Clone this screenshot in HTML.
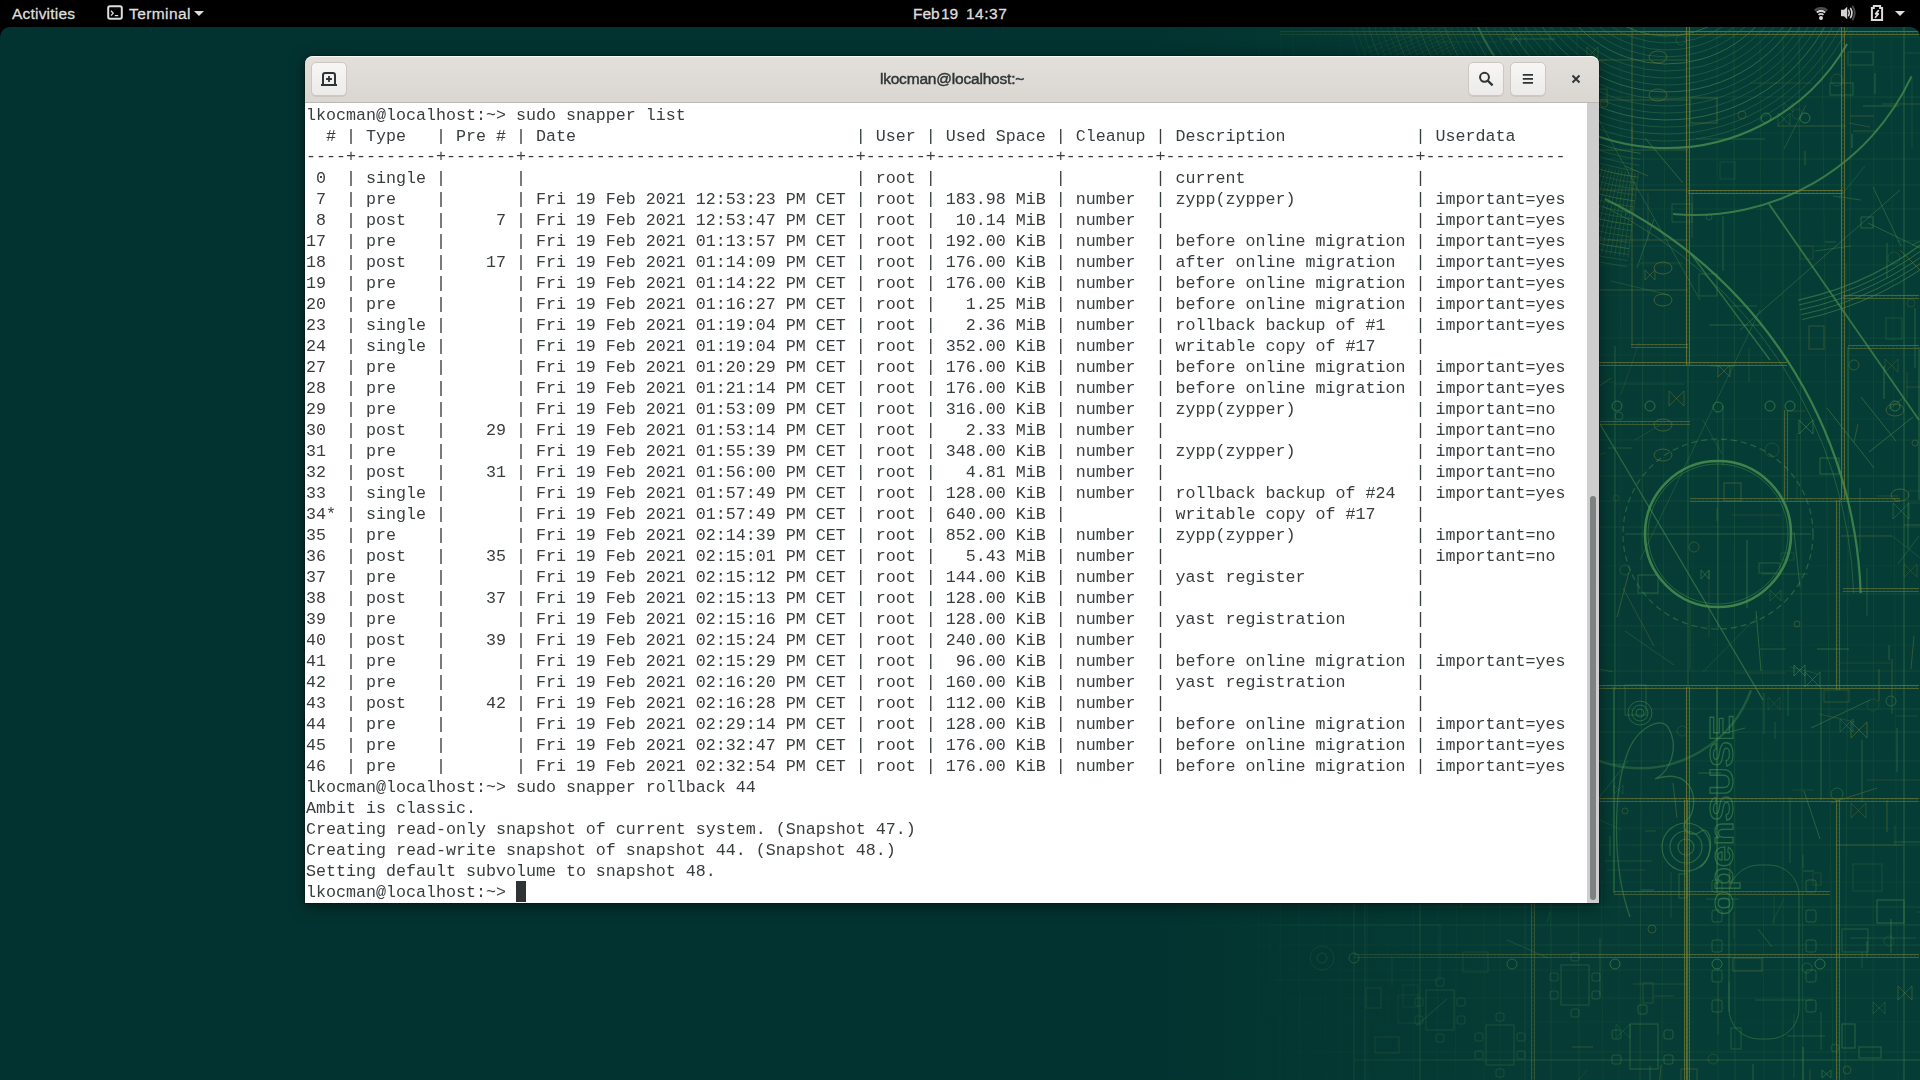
<!DOCTYPE html>
<html><head><meta charset="utf-8">
<style>
*{margin:0;padding:0;box-sizing:border-box}
html,body{width:1920px;height:1080px;overflow:hidden;background:#000}
body{position:relative;font-family:"Liberation Sans",sans-serif}
#desk{position:absolute;left:0;top:27px;width:1920px;height:1053px;background:linear-gradient(90deg,#033330 0,#033330 1150px,#053b34 1500px,#053d36 1920px);border-radius:10px 10px 0 0;overflow:hidden}
#bp{position:absolute;left:0;top:0}
#panel{position:absolute;left:0;top:0;width:1920px;height:27px;background:#000;color:#dedede;font-weight:normal;font-size:15.5px;-webkit-text-stroke:0.3px #dedede}
#panel .t{position:absolute;top:5px;line-height:18px;white-space:nowrap}
#panel svg{position:absolute;top:0;left:0}
#win{position:absolute;left:305px;top:56px;width:1294px;height:847px;border-radius:8px 8px 0 0;box-shadow:0 3px 15px rgba(0,0,0,0.5),0 0 0 1px rgba(0,0,0,0.2)}
#hb{position:absolute;left:0;top:0;width:1294px;height:47px;border-radius:8px 8px 0 0;background:linear-gradient(#e3e0dc,#dad6d2);border-bottom:1px solid #bfb8b1;box-shadow:inset 0 1px 0 rgba(255,255,255,0.8)}
#title{position:absolute;left:0;width:1294px;top:14px;line-height:18px;text-align:center;font-weight:normal;font-size:15.5px;letter-spacing:-0.2px;color:#2e3436;-webkit-text-stroke:0.45px #2e3436}
.btn{position:absolute;top:6px;width:36px;height:34px;border-radius:5px;border:1px solid #cdc7c2;background:linear-gradient(#f7f6f5,#edebe9);box-shadow:0 1px rgba(0,0,0,0.07)}
#hbsvg{position:absolute;left:0;top:0}
#term{position:absolute;left:0;top:47px;width:1282px;height:800px;background:#fff}
#sb{position:absolute;left:1282px;top:47px;width:12px;height:800px;background:#cecece}
#thumb{position:absolute;left:3px;top:393px;width:6px;height:404px;border-radius:3px;background:#7e8182}
pre{position:absolute;left:1px;top:2px;font-family:"Liberation Mono",monospace;font-size:16.6667px;line-height:21px;color:#383d3f;white-space:pre}
#cur{position:absolute;left:211px;top:778px;width:10px;height:21px;background:#2e3436}
</style></head><body>
<div id="desk">
<svg id="bp" width="1920" height="1053">
<defs>
<linearGradient id="fg" x1="0" y1="0" x2="1920" y2="0" gradientUnits="userSpaceOnUse">
<stop offset="0.60" stop-color="#fff" stop-opacity="0"/>
<stop offset="0.78" stop-color="#fff" stop-opacity="0.7"/>
<stop offset="0.86" stop-color="#fff" stop-opacity="1"/>
</linearGradient>
<mask id="fm" maskUnits="userSpaceOnUse" x="0" y="0" width="1920" height="1053"><rect width="1920" height="1053" fill="url(#fg)"/></mask>
<style>.g{stroke:#4c9450;fill:none}.o{stroke:#6f7a36;fill:none}</style>
</defs>
<g mask="url(#fm)">
<line x1="1233" y1="0" x2="1228" y2="1053" class="g" stroke-width="1" opacity="0.18"/>
<line x1="1259" y1="0" x2="1258" y2="1053" class="g" stroke-width="1" opacity="0.21"/>
<line x1="1281" y1="0" x2="1280" y2="1053" class="g" stroke-width="1" opacity="0.21"/>
<line x1="1293" y1="0" x2="1300" y2="1053" class="g" stroke-width="1" opacity="0.19"/>
<line x1="1319" y1="0" x2="1326" y2="1053" class="g" stroke-width="1" opacity="0.09"/>
<line x1="1341" y1="0" x2="1340" y2="1053" class="g" stroke-width="1" opacity="0.13"/>
<line x1="1365" y1="0" x2="1368" y2="1053" class="g" stroke-width="1" opacity="0.16"/>
<line x1="1394" y1="0" x2="1388" y2="1053" class="g" stroke-width="1" opacity="0.08"/>
<line x1="1411" y1="0" x2="1414" y2="1053" class="g" stroke-width="1" opacity="0.12"/>
<line x1="1443" y1="0" x2="1437" y2="1053" class="g" stroke-width="1" opacity="0.1"/>
<line x1="1466" y1="0" x2="1455" y2="1053" class="g" stroke-width="1" opacity="0.1"/>
<line x1="1486" y1="0" x2="1484" y2="1053" class="g" stroke-width="1" opacity="0.1"/>
<line x1="1500" y1="0" x2="1500" y2="1053" class="g" stroke-width="1" opacity="0.11"/>
<line x1="1526" y1="0" x2="1525" y2="1053" class="g" stroke-width="1" opacity="0.2"/>
<line x1="1550" y1="0" x2="1551" y2="1053" class="g" stroke-width="1" opacity="0.21"/>
<line x1="1577" y1="0" x2="1579" y2="1053" class="g" stroke-width="1" opacity="0.17"/>
<line x1="1594" y1="0" x2="1603" y2="1053" class="g" stroke-width="1" opacity="0.11"/>
<line x1="1621" y1="0" x2="1619" y2="1053" class="g" stroke-width="1" opacity="0.08"/>
<line x1="1644" y1="0" x2="1640" y2="1053" class="g" stroke-width="1" opacity="0.21"/>
<line x1="1665" y1="0" x2="1662" y2="1053" class="g" stroke-width="1" opacity="0.13"/>
<line x1="1693" y1="0" x2="1693" y2="1053" class="g" stroke-width="1" opacity="0.08"/>
<line x1="1717" y1="0" x2="1718" y2="1053" class="g" stroke-width="1" opacity="0.13"/>
<line x1="1734" y1="0" x2="1735" y2="1053" class="g" stroke-width="1" opacity="0.19"/>
<line x1="1760" y1="0" x2="1764" y2="1053" class="g" stroke-width="1" opacity="0.12"/>
<line x1="1783" y1="0" x2="1783" y2="1053" class="g" stroke-width="1" opacity="0.18"/>
<line x1="1799" y1="0" x2="1803" y2="1053" class="g" stroke-width="1" opacity="0.22"/>
<line x1="1822" y1="0" x2="1833" y2="1053" class="g" stroke-width="1" opacity="0.13"/>
<line x1="1851" y1="0" x2="1845" y2="1053" class="g" stroke-width="1" opacity="0.16"/>
<line x1="1874" y1="0" x2="1873" y2="1053" class="g" stroke-width="1" opacity="0.13"/>
<line x1="1891" y1="0" x2="1898" y2="1053" class="g" stroke-width="1" opacity="0.09"/>
<line x1="1230" y1="10" x2="1920" y2="10" class="g" stroke-width="1" opacity="0.13"/>
<line x1="1230" y1="40" x2="1920" y2="40" class="g" stroke-width="1" opacity="0.07"/>
<line x1="1230" y1="70" x2="1920" y2="70" class="g" stroke-width="1" opacity="0.17"/>
<line x1="1230" y1="106" x2="1920" y2="106" class="g" stroke-width="1" opacity="0.1"/>
<line x1="1230" y1="132" x2="1920" y2="132" class="g" stroke-width="1" opacity="0.17"/>
<line x1="1230" y1="158" x2="1920" y2="158" class="g" stroke-width="1" opacity="0.15"/>
<line x1="1230" y1="182" x2="1920" y2="182" class="g" stroke-width="1" opacity="0.13"/>
<line x1="1230" y1="219" x2="1920" y2="219" class="g" stroke-width="1" opacity="0.16"/>
<line x1="1230" y1="238" x2="1920" y2="238" class="g" stroke-width="1" opacity="0.11"/>
<line x1="1230" y1="268" x2="1920" y2="268" class="g" stroke-width="1" opacity="0.09"/>
<line x1="1230" y1="311" x2="1920" y2="311" class="g" stroke-width="1" opacity="0.13"/>
<line x1="1230" y1="328" x2="1920" y2="328" class="g" stroke-width="1" opacity="0.1"/>
<line x1="1230" y1="355" x2="1920" y2="355" class="g" stroke-width="1" opacity="0.1"/>
<line x1="1230" y1="392" x2="1920" y2="392" class="g" stroke-width="1" opacity="0.1"/>
<line x1="1230" y1="413" x2="1920" y2="413" class="g" stroke-width="1" opacity="0.14"/>
<line x1="1230" y1="449" x2="1920" y2="449" class="g" stroke-width="1" opacity="0.18"/>
<line x1="1230" y1="474" x2="1920" y2="474" class="g" stroke-width="1" opacity="0.15"/>
<line x1="1230" y1="500" x2="1920" y2="500" class="g" stroke-width="1" opacity="0.18"/>
<line x1="1230" y1="539" x2="1920" y2="539" class="g" stroke-width="1" opacity="0.06"/>
<line x1="1230" y1="567" x2="1920" y2="567" class="g" stroke-width="1" opacity="0.16"/>
<line x1="1230" y1="599" x2="1920" y2="599" class="g" stroke-width="1" opacity="0.14"/>
<line x1="1230" y1="618" x2="1920" y2="618" class="g" stroke-width="1" opacity="0.07"/>
<line x1="1230" y1="644" x2="1920" y2="644" class="g" stroke-width="1" opacity="0.16"/>
<line x1="1230" y1="682" x2="1920" y2="682" class="g" stroke-width="1" opacity="0.16"/>
<line x1="1230" y1="705" x2="1920" y2="705" class="g" stroke-width="1" opacity="0.18"/>
<line x1="1230" y1="734" x2="1920" y2="734" class="g" stroke-width="1" opacity="0.14"/>
<line x1="1230" y1="772" x2="1920" y2="772" class="g" stroke-width="1" opacity="0.07"/>
<line x1="1230" y1="801" x2="1920" y2="801" class="g" stroke-width="1" opacity="0.1"/>
<line x1="1230" y1="818" x2="1920" y2="818" class="g" stroke-width="1" opacity="0.16"/>
<line x1="1230" y1="855" x2="1920" y2="855" class="g" stroke-width="1" opacity="0.08"/>
<line x1="1230" y1="880" x2="1920" y2="880" class="g" stroke-width="1" opacity="0.18"/>
<line x1="1230" y1="918" x2="1920" y2="918" class="g" stroke-width="1" opacity="0.18"/>
<line x1="1230" y1="943" x2="1920" y2="943" class="g" stroke-width="1" opacity="0.12"/>
<line x1="1230" y1="971" x2="1920" y2="971" class="g" stroke-width="1" opacity="0.12"/>
<line x1="1230" y1="995" x2="1920" y2="995" class="g" stroke-width="1" opacity="0.07"/>
<line x1="1230" y1="1025" x2="1920" y2="1025" class="g" stroke-width="1" opacity="0.14"/>
<path d="M1756 -51A96 96 0 0 1 1576.8 -54.2" class="g" stroke-width="1" opacity="0.55"/>
<path d="M1762.5 -48.4A103 103 0 0 1 1570.2 -51.8" class="g" stroke-width="1" opacity="0.32"/>
<path d="M1769 -45.8A110 110 0 0 1 1563.6 -49.4" class="g" stroke-width="1" opacity="0.32"/>
<path d="M1775.5 -43.2A117 117 0 0 1 1557.1 -47" class="g" stroke-width="1" opacity="0.32"/>
<path d="M1782 -40.5A124 124 0 0 1 1550.5 -44.6" class="g" stroke-width="1" opacity="0.55"/>
<path d="M1788.5 -37.9A131 131 0 0 1 1543.9 -42.2" class="g" stroke-width="1" opacity="0.32"/>
<path d="M1795 -35.3A138 138 0 0 1 1537.3 -39.8" class="g" stroke-width="1" opacity="0.32"/>
<path d="M1801.4 -32.7A145 145 0 0 1 1530.7 -37.4" class="g" stroke-width="1" opacity="0.32"/>
<path d="M1807.9 -30.1A152 152 0 0 1 1524.2 -35" class="g" stroke-width="1" opacity="0.55"/>
<path d="M1814.4 -27.4A159 159 0 0 1 1517.6 -32.6" class="g" stroke-width="1" opacity="0.32"/>
<path d="M1820.9 -24.8A166 166 0 0 1 1511 -30.2" class="g" stroke-width="1" opacity="0.32"/>
<path d="M1827.4 -22.2A173 173 0 0 1 1504.4 -27.8" class="g" stroke-width="1" opacity="0.32"/>
<path d="M1833.9 -19.6A180 180 0 0 1 1497.9 -25.4" class="g" stroke-width="1" opacity="0.55"/>
<path d="M1840.4 -16.9A187 187 0 0 1 1491.3 -23" class="g" stroke-width="1" opacity="0.32"/>
<path d="M1846.9 -14.3A194 194 0 0 1 1484.7 -20.6" class="g" stroke-width="1" opacity="0.32"/>
<path d="M1853.4 -11.7A201 201 0 0 1 1478.1 -18.3" class="g" stroke-width="1" opacity="0.32"/>
<path d="M1640.8 126.4A215 215 0 0 1 1459.3 -31.4" class="g" stroke-width="1" opacity="0.5"/>
<path d="M1640.1 132.4A221 221 0 0 1 1453.5 -29.8" class="g" stroke-width="1" opacity="0.3"/>
<path d="M1639.3 138.3A227 227 0 0 1 1447.7 -28.2" class="g" stroke-width="1" opacity="0.3"/>
<path d="M1638.6 144.3A233 233 0 0 1 1441.9 -26.7" class="g" stroke-width="1" opacity="0.3"/>
<path d="M1637.9 150.2A239 239 0 0 1 1436.1 -25.1" class="g" stroke-width="1" opacity="0.5"/>
<path d="M1637.1 156.2A245 245 0 0 1 1430.3 -23.6" class="g" stroke-width="1" opacity="0.3"/>
<path d="M1636.4 162.1A251 251 0 0 1 1424.6 -22" class="g" stroke-width="1" opacity="0.3"/>
<path d="M1635.7 168.1A257 257 0 0 1 1418.8 -20.5" class="g" stroke-width="1" opacity="0.3"/>
<path d="M1634.9 174A263 263 0 0 1 1413 -18.9" class="g" stroke-width="1" opacity="0.5"/>
<path d="M1634.2 180A269 269 0 0 1 1407.2 -17.4" class="g" stroke-width="1" opacity="0.3"/>
<path d="M1633.5 186A275 275 0 0 1 1401.4 -15.8" class="g" stroke-width="1" opacity="0.3"/>
<path d="M1632.8 191.9A281 281 0 0 1 1395.6 -14.3" class="g" stroke-width="1" opacity="0.3"/>
<path d="M1632 197.9A287 287 0 0 1 1389.8 -12.7" class="g" stroke-width="1" opacity="0.5"/>
<path d="M1631.3 203.8A293 293 0 0 1 1384 -11.2" class="g" stroke-width="1" opacity="0.3"/>
<path d="M1630.6 209.8A299 299 0 0 1 1378.2 -9.6" class="g" stroke-width="1" opacity="0.3"/>
<path d="M1629.8 215.7A305 305 0 0 1 1372.4 -8.1" class="g" stroke-width="1" opacity="0.3"/>
<path d="M1629.1 221.7A311 311 0 0 1 1366.6 -6.5" class="g" stroke-width="1" opacity="0.5"/>
<path d="M1628.4 227.6A317 317 0 0 1 1360.8 -5" class="g" stroke-width="1" opacity="0.3"/>
<path d="M1627.6 233.6A323 323 0 0 1 1355 -3.4" class="g" stroke-width="1" opacity="0.3"/>
<path d="M1626.9 239.5A329 329 0 0 1 1349.2 -1.8" class="g" stroke-width="1" opacity="0.3"/>
<path d="M1847.1 17A208 208 0 0 1 1471.5 -15.9" class="g" stroke-width="2" opacity="0.75"/>
<path d="M1911.5 49.4A240 240 0 0 1 1673.1 187.1" class="g" stroke-width="2" opacity="0.7"/>
<path d="M2026.8 81.1A318 318 0 0 1 1798.1 273.1" class="g" stroke-width="1.3" opacity="0.55"/>
<path d="M2031.5 83A323 323 0 0 1 1799.2 277.9" class="g" stroke-width="1" opacity="0.55"/>
<path d="M2036.1 84.9A328 328 0 0 1 1800.2 282.8" class="g" stroke-width="1" opacity="0.55"/>
<path d="M2040.8 86.7A333 333 0 0 1 1801.2 287.7" class="g" stroke-width="1" opacity="0.55"/>
<path d="M2045.4 88.6A338 338 0 0 1 1802.3 292.6" class="g" stroke-width="1" opacity="0.55"/>
<line x1="1638.4" y1="146.2" x2="1628" y2="230.6" class="o" stroke-width="0.8" opacity="0.35"/>
<line x1="1635.1" y1="145.8" x2="1623.6" y2="230" class="o" stroke-width="0.8" opacity="0.35"/>
<line x1="1631.9" y1="145.4" x2="1619.1" y2="229.4" class="o" stroke-width="0.8" opacity="0.35"/>
<line x1="1628.6" y1="144.8" x2="1614.7" y2="228.7" class="o" stroke-width="0.8" opacity="0.35"/>
<line x1="1625.4" y1="144.3" x2="1610.3" y2="227.9" class="o" stroke-width="0.8" opacity="0.35"/>
<line x1="1622.2" y1="143.7" x2="1605.9" y2="227.1" class="o" stroke-width="0.8" opacity="0.35"/>
<line x1="1618.9" y1="143" x2="1601.6" y2="226.2" class="o" stroke-width="0.8" opacity="0.35"/>
<line x1="1615.7" y1="142.3" x2="1597.2" y2="225.3" class="o" stroke-width="0.8" opacity="0.35"/>
<line x1="1612.5" y1="141.6" x2="1592.8" y2="224.3" class="o" stroke-width="0.8" opacity="0.35"/>
<line x1="1609.4" y1="140.8" x2="1588.5" y2="223.2" class="o" stroke-width="0.8" opacity="0.35"/>
<line x1="1606.2" y1="140" x2="1584.2" y2="222.1" class="o" stroke-width="0.8" opacity="0.35"/>
<line x1="1603" y1="139.1" x2="1579.9" y2="220.9" class="o" stroke-width="0.8" opacity="0.35"/>
<line x1="1599.9" y1="138.2" x2="1575.6" y2="219.7" class="o" stroke-width="0.8" opacity="0.35"/>
<line x1="1596.7" y1="137.2" x2="1571.3" y2="218.4" class="o" stroke-width="0.8" opacity="0.35"/>
<line x1="1593.6" y1="136.2" x2="1567.1" y2="217" class="o" stroke-width="0.8" opacity="0.35"/>
<line x1="1590.5" y1="135.2" x2="1562.8" y2="215.6" class="o" stroke-width="0.8" opacity="0.35"/>
<line x1="1587.4" y1="134.1" x2="1558.6" y2="214.1" class="o" stroke-width="0.8" opacity="0.35"/>
<line x1="1584.3" y1="133" x2="1554.4" y2="212.5" class="o" stroke-width="0.8" opacity="0.35"/>
<line x1="1581.3" y1="131.8" x2="1550.2" y2="210.9" class="o" stroke-width="0.8" opacity="0.35"/>
<line x1="1578.2" y1="130.6" x2="1546.1" y2="209.3" class="o" stroke-width="0.8" opacity="0.35"/>
<line x1="1575.2" y1="129.3" x2="1542" y2="207.6" class="o" stroke-width="0.8" opacity="0.35"/>
<line x1="1572.2" y1="128" x2="1537.9" y2="205.8" class="o" stroke-width="0.8" opacity="0.35"/>
<line x1="1569.2" y1="126.7" x2="1533.8" y2="204" class="o" stroke-width="0.8" opacity="0.35"/>
<line x1="1566.2" y1="125.3" x2="1529.7" y2="202.1" class="o" stroke-width="0.8" opacity="0.35"/>
<line x1="1563.2" y1="123.9" x2="1525.7" y2="200.1" class="o" stroke-width="0.8" opacity="0.35"/>
<line x1="1560.3" y1="122.4" x2="1521.7" y2="198.1" class="o" stroke-width="0.8" opacity="0.35"/>
<line x1="1557.4" y1="120.9" x2="1517.8" y2="196.1" class="o" stroke-width="0.8" opacity="0.35"/>
<line x1="1554.5" y1="119.3" x2="1513.8" y2="194" class="o" stroke-width="0.8" opacity="0.35"/>
<line x1="1551.6" y1="117.7" x2="1509.9" y2="191.8" class="o" stroke-width="0.8" opacity="0.35"/>
<line x1="1548.8" y1="116.1" x2="1506" y2="189.6" class="o" stroke-width="0.8" opacity="0.35"/>
<line x1="1546" y1="114.4" x2="1502.2" y2="187.3" class="o" stroke-width="0.8" opacity="0.35"/>
<line x1="1543.2" y1="112.7" x2="1498.4" y2="185" class="o" stroke-width="0.8" opacity="0.35"/>
<line x1="1540.4" y1="111" x2="1494.6" y2="182.6" class="o" stroke-width="0.8" opacity="0.35"/>
<line x1="1537.6" y1="109.2" x2="1490.8" y2="180.2" class="o" stroke-width="0.8" opacity="0.35"/>
<line x1="1534.9" y1="107.4" x2="1487.1" y2="177.7" class="o" stroke-width="0.8" opacity="0.35"/>
<line x1="1532.2" y1="105.5" x2="1483.5" y2="175.1" class="o" stroke-width="0.8" opacity="0.35"/>
<line x1="1529.5" y1="103.6" x2="1479.8" y2="172.5" class="o" stroke-width="0.8" opacity="0.35"/>
<line x1="1526.9" y1="101.7" x2="1476.2" y2="169.9" class="o" stroke-width="0.8" opacity="0.35"/>
<line x1="1524.3" y1="99.7" x2="1472.6" y2="167.2" class="o" stroke-width="0.8" opacity="0.35"/>
<line x1="1521.7" y1="97.7" x2="1469.1" y2="164.5" class="o" stroke-width="0.8" opacity="0.35"/>
<line x1="1519.1" y1="95.6" x2="1465.6" y2="161.7" class="o" stroke-width="0.8" opacity="0.35"/>
<line x1="1516.6" y1="93.5" x2="1462.2" y2="158.9" class="o" stroke-width="0.8" opacity="0.35"/>
<line x1="1514.1" y1="91.4" x2="1458.8" y2="156" class="o" stroke-width="0.8" opacity="0.35"/>
<line x1="1511.6" y1="89.3" x2="1455.4" y2="153" class="o" stroke-width="0.8" opacity="0.35"/>
<line x1="1509.1" y1="87.1" x2="1452" y2="150.1" class="o" stroke-width="0.8" opacity="0.35"/>
<line x1="1506.7" y1="84.9" x2="1448.8" y2="147" class="o" stroke-width="0.8" opacity="0.35"/>
<line x1="1504.3" y1="82.6" x2="1445.5" y2="144" class="o" stroke-width="0.8" opacity="0.35"/>
<line x1="1502" y1="80.3" x2="1442.3" y2="140.8" class="o" stroke-width="0.8" opacity="0.35"/>
<line x1="1499.7" y1="78" x2="1439.2" y2="137.7" class="o" stroke-width="0.8" opacity="0.35"/>
<line x1="1497.4" y1="75.7" x2="1436" y2="134.5" class="o" stroke-width="0.8" opacity="0.35"/>
<line x1="1495.1" y1="73.3" x2="1433" y2="131.2" class="o" stroke-width="0.8" opacity="0.35"/>
<line x1="1492.9" y1="70.9" x2="1429.9" y2="128" class="o" stroke-width="0.8" opacity="0.35"/>
<line x1="1490.7" y1="68.4" x2="1427" y2="124.6" class="o" stroke-width="0.8" opacity="0.35"/>
<line x1="1488.6" y1="65.9" x2="1424" y2="121.2" class="o" stroke-width="0.8" opacity="0.35"/>
<line x1="1486.5" y1="63.4" x2="1421.1" y2="117.8" class="o" stroke-width="0.8" opacity="0.35"/>
<line x1="1484.4" y1="60.9" x2="1418.3" y2="114.4" class="o" stroke-width="0.8" opacity="0.35"/>
<line x1="1482.3" y1="58.3" x2="1415.5" y2="110.9" class="o" stroke-width="0.8" opacity="0.35"/>
<line x1="1480.3" y1="55.7" x2="1412.8" y2="107.4" class="o" stroke-width="0.8" opacity="0.35"/>
<line x1="1478.3" y1="53.1" x2="1410.1" y2="103.8" class="o" stroke-width="0.8" opacity="0.35"/>
<line x1="1476.4" y1="50.5" x2="1407.5" y2="100.2" class="o" stroke-width="0.8" opacity="0.35"/>
<line x1="1474.5" y1="47.8" x2="1404.9" y2="96.5" class="o" stroke-width="0.8" opacity="0.35"/>
<line x1="1472.6" y1="45.1" x2="1402.3" y2="92.9" class="o" stroke-width="0.8" opacity="0.35"/>
<line x1="1470.8" y1="42.4" x2="1399.8" y2="89.2" class="o" stroke-width="0.8" opacity="0.35"/>
<line x1="1469" y1="39.6" x2="1397.4" y2="85.4" class="o" stroke-width="0.8" opacity="0.35"/>
<line x1="1467.3" y1="36.8" x2="1395" y2="81.6" class="o" stroke-width="0.8" opacity="0.35"/>
<line x1="1465.6" y1="34" x2="1392.7" y2="77.8" class="o" stroke-width="0.8" opacity="0.35"/>
<line x1="1463.9" y1="31.2" x2="1390.4" y2="74" class="o" stroke-width="0.8" opacity="0.35"/>
<line x1="1462.3" y1="28.4" x2="1388.2" y2="70.1" class="o" stroke-width="0.8" opacity="0.35"/>
<line x1="1460.7" y1="25.5" x2="1386" y2="66.2" class="o" stroke-width="0.8" opacity="0.35"/>
<line x1="1459.1" y1="22.6" x2="1383.9" y2="62.2" class="o" stroke-width="0.8" opacity="0.35"/>
<line x1="1457.6" y1="19.7" x2="1381.9" y2="58.3" class="o" stroke-width="0.8" opacity="0.35"/>
<line x1="1456.1" y1="16.8" x2="1379.9" y2="54.3" class="o" stroke-width="0.8" opacity="0.35"/>
<line x1="1454.7" y1="13.8" x2="1377.9" y2="50.3" class="o" stroke-width="0.8" opacity="0.35"/>
<line x1="1453.3" y1="10.8" x2="1376" y2="46.2" class="o" stroke-width="0.8" opacity="0.35"/>
<line x1="1452" y1="7.8" x2="1374.2" y2="42.1" class="o" stroke-width="0.8" opacity="0.35"/>
<line x1="1450.7" y1="4.8" x2="1372.4" y2="38" class="o" stroke-width="0.8" opacity="0.35"/>
<line x1="1449.4" y1="1.8" x2="1370.7" y2="33.9" class="o" stroke-width="0.8" opacity="0.35"/>
<line x1="1448.2" y1="-1.3" x2="1369.1" y2="29.8" class="o" stroke-width="0.8" opacity="0.35"/>
<line x1="1447" y1="-4.3" x2="1367.5" y2="25.6" class="o" stroke-width="0.8" opacity="0.35"/>
<line x1="1445.9" y1="-7.4" x2="1365.9" y2="21.4" class="o" stroke-width="0.8" opacity="0.35"/>
<path d="M1604.9 172.1A456 456 0 0 1 1860.7 566.1" class="g" stroke-width="2.2" opacity="0.75"/>
<path d="M1601.8 178.4A449 449 0 0 1 1853.7 566.3" class="g" stroke-width="1" opacity="0.4"/>
<line x1="1769" y1="177" x2="1919" y2="393" class="g" stroke-width="1.8" opacity="0.65"/>
<line x1="1691" y1="227" x2="1770" y2="333" class="g" stroke-width="1.4" opacity="0.55"/>
<line x1="1599" y1="93" x2="1700" y2="273" class="g" stroke-width="1" opacity="0.35"/>
<line x1="1740" y1="303" x2="1900" y2="163" class="g" stroke-width="1" opacity="0.4"/>
<line x1="1640" y1="533" x2="1760" y2="283" class="g" stroke-width="1" opacity="0.3"/>
<line x1="1686.5" y1="0" x2="1686.5" y2="338" class="o" stroke-width="1.1" opacity="0.85"/>
<line x1="1689.5" y1="0" x2="1689.5" y2="338" class="o" stroke-width="1.1" opacity="0.765"/>
<line x1="1688" y1="0" x2="1688" y2="338" class="o" stroke-width="1" opacity="0.2975" stroke-dasharray="2 2"/>
<line x1="1686.5" y1="660" x2="1686.5" y2="1053" class="o" stroke-width="1.1" opacity="0.8"/>
<line x1="1689.5" y1="660" x2="1689.5" y2="1053" class="o" stroke-width="1.1" opacity="0.7200000000000001"/>
<line x1="1688" y1="660" x2="1688" y2="1053" class="o" stroke-width="1" opacity="0.27999999999999997" stroke-dasharray="2 2"/>
<line x1="1688" y1="338" x2="1688" y2="660" class="g" stroke-width="1" opacity="0.35"/>
<line x1="1600" y1="394.5" x2="1690" y2="394.5" class="o" stroke-width="1.1" opacity="0.6"/>
<line x1="1600" y1="397.5" x2="1690" y2="397.5" class="o" stroke-width="1.1" opacity="0.54"/>
<line x1="1600" y1="396" x2="1690" y2="396" class="o" stroke-width="1" opacity="0.21" stroke-dasharray="2 2"/>
<line x1="1690" y1="471.5" x2="1900" y2="471.5" class="o" stroke-width="1.1" opacity="0.6"/>
<line x1="1690" y1="474.5" x2="1900" y2="474.5" class="o" stroke-width="1.1" opacity="0.54"/>
<line x1="1690" y1="473" x2="1900" y2="473" class="o" stroke-width="1" opacity="0.21" stroke-dasharray="2 2"/>
<line x1="1784.5" y1="383" x2="1784.5" y2="473" class="o" stroke-width="1.1" opacity="0.6"/>
<line x1="1787.5" y1="383" x2="1787.5" y2="473" class="o" stroke-width="1.1" opacity="0.54"/>
<line x1="1786" y1="383" x2="1786" y2="473" class="o" stroke-width="1" opacity="0.21" stroke-dasharray="2 2"/>
<line x1="1600" y1="397" x2="1763" y2="673" class="g" stroke-width="1.3" opacity="0.55"/>
<line x1="1718" y1="413" x2="1718" y2="603" class="g" stroke-width="1" opacity="0.4"/>
<line x1="1625" y1="507" x2="1811" y2="507" class="g" stroke-width="1" opacity="0.4"/>
<line x1="1841.5" y1="0" x2="1841.5" y2="473" class="o" stroke-width="1.1" opacity="0.8"/>
<line x1="1844.5" y1="0" x2="1844.5" y2="473" class="o" stroke-width="1.1" opacity="0.7200000000000001"/>
<line x1="1843" y1="0" x2="1843" y2="473" class="o" stroke-width="1" opacity="0.27999999999999997" stroke-dasharray="2 2"/>
<line x1="1836.5" y1="473" x2="1836.5" y2="663" class="o" stroke-width="1.1" opacity="0.7"/>
<line x1="1839.5" y1="473" x2="1839.5" y2="663" class="o" stroke-width="1.1" opacity="0.63"/>
<line x1="1838" y1="473" x2="1838" y2="663" class="o" stroke-width="1" opacity="0.24499999999999997" stroke-dasharray="2 2"/>
<line x1="1836.5" y1="773" x2="1836.5" y2="1053" class="o" stroke-width="1.1" opacity="0.7"/>
<line x1="1839.5" y1="773" x2="1839.5" y2="1053" class="o" stroke-width="1.1" opacity="0.63"/>
<line x1="1838" y1="773" x2="1838" y2="1053" class="o" stroke-width="1" opacity="0.24499999999999997" stroke-dasharray="2 2"/>
<line x1="1684.5" y1="773" x2="1684.5" y2="1053" class="o" stroke-width="1.1" opacity="0.75"/>
<line x1="1687.5" y1="773" x2="1687.5" y2="1053" class="o" stroke-width="1.1" opacity="0.675"/>
<line x1="1686" y1="773" x2="1686" y2="1053" class="o" stroke-width="1" opacity="0.26249999999999996" stroke-dasharray="2 2"/>
<line x1="1632" y1="0" x2="1632" y2="319" class="o" stroke-width="1" opacity="0.55"/>
<line x1="1614" y1="660" x2="1614" y2="866" class="g" stroke-width="1.3" opacity="0.6"/>
<line x1="1717" y1="660" x2="1717" y2="866" class="g" stroke-width="1.3" opacity="0.55"/>
<line x1="1821" y1="660" x2="1821" y2="773" class="g" stroke-width="1" opacity="0.45"/>
<line x1="1904" y1="0" x2="1904" y2="1053" class="g" stroke-width="1" opacity="0.45"/>
<line x1="1615" y1="319" x2="1615" y2="663" class="g" stroke-width="1" opacity="0.4"/>
<line x1="1280" y1="4.5" x2="1920" y2="4.5" class="o" stroke-width="1.1" opacity="0.8"/>
<line x1="1280" y1="7.5" x2="1920" y2="7.5" class="o" stroke-width="1.1" opacity="0.7200000000000001"/>
<line x1="1280" y1="6" x2="1920" y2="6" class="o" stroke-width="1" opacity="0.27999999999999997" stroke-dasharray="2 2"/>
<line x1="1688" y1="163.5" x2="1843" y2="163.5" class="o" stroke-width="1.1" opacity="0.8"/>
<line x1="1688" y1="166.5" x2="1843" y2="166.5" class="o" stroke-width="1.1" opacity="0.7200000000000001"/>
<line x1="1688" y1="165" x2="1843" y2="165" class="o" stroke-width="1" opacity="0.27999999999999997" stroke-dasharray="2 2"/>
<line x1="1599" y1="335.5" x2="1787" y2="335.5" class="o" stroke-width="1.1" opacity="0.75"/>
<line x1="1599" y1="338.5" x2="1787" y2="338.5" class="o" stroke-width="1.1" opacity="0.675"/>
<line x1="1599" y1="337" x2="1787" y2="337" class="o" stroke-width="1" opacity="0.26249999999999996" stroke-dasharray="2 2"/>
<line x1="1631" y1="317.5" x2="1688" y2="317.5" class="o" stroke-width="1.1" opacity="0.6"/>
<line x1="1631" y1="320.5" x2="1688" y2="320.5" class="o" stroke-width="1.1" opacity="0.54"/>
<line x1="1631" y1="319" x2="1688" y2="319" class="o" stroke-width="1" opacity="0.21" stroke-dasharray="2 2"/>
<line x1="1843" y1="268.5" x2="1919" y2="268.5" class="o" stroke-width="1.1" opacity="0.65"/>
<line x1="1843" y1="271.5" x2="1919" y2="271.5" class="o" stroke-width="1.1" opacity="0.5850000000000001"/>
<line x1="1843" y1="270" x2="1919" y2="270" class="o" stroke-width="1" opacity="0.22749999999999998" stroke-dasharray="2 2"/>
<line x1="1848" y1="318.5" x2="1919" y2="318.5" class="o" stroke-width="1.1" opacity="0.6"/>
<line x1="1848" y1="321.5" x2="1919" y2="321.5" class="o" stroke-width="1.1" opacity="0.54"/>
<line x1="1848" y1="320" x2="1919" y2="320" class="o" stroke-width="1" opacity="0.21" stroke-dasharray="2 2"/>
<line x1="1599" y1="658.5" x2="1919" y2="658.5" class="o" stroke-width="1.1" opacity="0.75"/>
<line x1="1599" y1="661.5" x2="1919" y2="661.5" class="o" stroke-width="1.1" opacity="0.675"/>
<line x1="1599" y1="660" x2="1919" y2="660" class="o" stroke-width="1" opacity="0.26249999999999996" stroke-dasharray="2 2"/>
<line x1="1599" y1="771.5" x2="1919" y2="771.5" class="o" stroke-width="1.1" opacity="0.7"/>
<line x1="1599" y1="774.5" x2="1919" y2="774.5" class="o" stroke-width="1.1" opacity="0.63"/>
<line x1="1599" y1="773" x2="1919" y2="773" class="o" stroke-width="1" opacity="0.24499999999999997" stroke-dasharray="2 2"/>
<line x1="1614" y1="864.5" x2="1830" y2="864.5" class="o" stroke-width="1.1" opacity="0.6"/>
<line x1="1614" y1="867.5" x2="1830" y2="867.5" class="o" stroke-width="1.1" opacity="0.54"/>
<line x1="1614" y1="866" x2="1830" y2="866" class="o" stroke-width="1" opacity="0.21" stroke-dasharray="2 2"/>
<line x1="1354" y1="927.5" x2="1919" y2="927.5" class="o" stroke-width="1.1" opacity="0.65"/>
<line x1="1354" y1="930.5" x2="1919" y2="930.5" class="o" stroke-width="1.1" opacity="0.5850000000000001"/>
<line x1="1354" y1="929" x2="1919" y2="929" class="o" stroke-width="1" opacity="0.22749999999999998" stroke-dasharray="2 2"/>
<line x1="1354" y1="873" x2="1354" y2="1053" class="g" stroke-width="1" opacity="0.45"/>
<line x1="1365" y1="873" x2="1365" y2="1053" class="g" stroke-width="1" opacity="0.4"/>
<line x1="1420" y1="873" x2="1420" y2="1053" class="g" stroke-width="1" opacity="0.45"/>
<line x1="1531.5" y1="873" x2="1531.5" y2="1053" class="o" stroke-width="1.1" opacity="0.6"/>
<line x1="1534.5" y1="873" x2="1534.5" y2="1053" class="o" stroke-width="1.1" opacity="0.54"/>
<line x1="1533" y1="873" x2="1533" y2="1053" class="o" stroke-width="1" opacity="0.21" stroke-dasharray="2 2"/>
<line x1="1200" y1="898" x2="1920" y2="898" class="g" stroke-width="1" opacity="0.25"/>
<line x1="1354" y1="1033" x2="1920" y2="1033" class="g" stroke-width="1" opacity="0.4"/>
<circle cx="1354" cy="931" r="5" class="g" stroke-width="1" opacity="0.5"/>
<line x1="1843" y1="561.5" x2="1919" y2="561.5" class="o" stroke-width="1.1" opacity="0.6"/>
<line x1="1843" y1="564.5" x2="1919" y2="564.5" class="o" stroke-width="1.1" opacity="0.54"/>
<line x1="1843" y1="563" x2="1919" y2="563" class="o" stroke-width="1" opacity="0.21" stroke-dasharray="2 2"/>
<line x1="1848" y1="320" x2="1848" y2="473" class="g" stroke-width="1" opacity="0.5"/>
<line x1="1919" y1="320" x2="1919" y2="473" class="g" stroke-width="1" opacity="0.5"/>
<line x1="1599" y1="33" x2="1688" y2="33" class="o" stroke-width="1" opacity="0.45"/>
<line x1="1599" y1="73" x2="1688" y2="73" class="o" stroke-width="1" opacity="0.45"/>
<line x1="1599" y1="123" x2="1688" y2="123" class="o" stroke-width="1" opacity="0.45"/>
<line x1="1599" y1="163" x2="1688" y2="163" class="o" stroke-width="1" opacity="0.45"/>
<line x1="1599" y1="213" x2="1688" y2="213" class="o" stroke-width="1" opacity="0.45"/>
<line x1="1599" y1="263" x2="1688" y2="263" class="o" stroke-width="1" opacity="0.45"/>
<ellipse cx="1658" cy="30" rx="9" ry="6" class="o" stroke-width="1" opacity="0.55"/>
<ellipse cx="1658" cy="68" rx="9" ry="6" class="o" stroke-width="1" opacity="0.55"/>
<ellipse cx="1663" cy="241" rx="9" ry="6" class="o" stroke-width="1" opacity="0.55"/>
<ellipse cx="1663" cy="273" rx="9" ry="6" class="o" stroke-width="1" opacity="0.55"/>
<ellipse cx="1663" cy="398" rx="9" ry="6" class="o" stroke-width="1" opacity="0.55"/>
<ellipse cx="1663" cy="428" rx="9" ry="6" class="o" stroke-width="1" opacity="0.55"/>
<ellipse cx="1895" cy="383" rx="9" ry="6" class="o" stroke-width="1" opacity="0.55"/>
<ellipse cx="1900" cy="468" rx="9" ry="6" class="o" stroke-width="1" opacity="0.55"/>
<circle cx="1718" cy="507" r="73" class="g" stroke-width="2.6" opacity="0.8"/>
<circle cx="1718" cy="507" r="70" class="g" stroke-width="1" opacity="0.45"/>
<circle cx="1718" cy="507" r="95" class="g" stroke-width="1.2" opacity="0.45" stroke-dasharray="6 4"/>
<path d="M1750.9 663.4A118 118 0 0 1 1522.4 633.3" class="g" stroke-width="2.5" opacity="0.35"/>
<circle cx="1617" cy="379" r="5" class="g" stroke-width="1" opacity="0.6"/>
<circle cx="1650" cy="379" r="5" class="g" stroke-width="1" opacity="0.6"/>
<circle cx="1718" cy="380" r="5" class="g" stroke-width="1" opacity="0.6"/>
<circle cx="1770" cy="379" r="5" class="g" stroke-width="1" opacity="0.6"/>
<circle cx="1790" cy="379" r="5" class="g" stroke-width="1" opacity="0.6"/>
<circle cx="1895" cy="379" r="5" class="g" stroke-width="1" opacity="0.6"/>
<circle cx="1322" cy="931" r="5" class="g" stroke-width="1" opacity="0.6"/>
<circle cx="1354" cy="931" r="5" class="g" stroke-width="1" opacity="0.6"/>
<circle cx="1512" cy="937" r="5" class="g" stroke-width="1" opacity="0.6"/>
<circle cx="1615" cy="937" r="5" class="g" stroke-width="1" opacity="0.6"/>
<circle cx="1717" cy="937" r="5" class="g" stroke-width="1" opacity="0.6"/>
<circle cx="1820" cy="937" r="5" class="g" stroke-width="1" opacity="0.6"/>
<circle cx="1766" cy="91" r="5" class="g" stroke-width="1" opacity="0.6"/>
<circle cx="1805" cy="91" r="5" class="g" stroke-width="1" opacity="0.6"/>
<circle cx="1322" cy="931" r="12" class="g" stroke-width="1" opacity="0.45"/>
<path d="M1630 890 C1612 840 1612 760 1630 720 C1640 700 1660 690 1668 700 C1680 720 1670 745 1655 752 C1690 740 1700 770 1690 790 C1676 800 1690 812 1700 805 C1712 795 1716 830 1700 840" class="g" stroke-width="1.3" opacity="0.5"/>
<circle cx="1640" cy="686" r="4" class="g" stroke-width="1" opacity="0.5"/>
<circle cx="1640" cy="686" r="8" class="g" stroke-width="1" opacity="0.5"/>
<circle cx="1640" cy="686" r="12" class="g" stroke-width="1" opacity="0.5"/>
<circle cx="1686" cy="820" r="8" class="g" stroke-width="1.2" opacity="0.5"/>
<circle cx="1686" cy="820" r="16" class="g" stroke-width="1.2" opacity="0.5"/>
<circle cx="1686" cy="820" r="24" class="g" stroke-width="1.2" opacity="0.5"/>
<text transform="translate(1733 888) rotate(-90)" font-family="Liberation Sans" font-size="34" font-weight="bold" fill="none" stroke="#4f9b55" stroke-width="1.2" opacity="0.5" textLength="200" lengthAdjust="spacingAndGlyphs">openSUSE</text>
<rect x="1729" y="838" width="70" height="174" rx="30" class="g" stroke-width="1" opacity="0.45"/>
<rect x="1712" y="853" width="10" height="12" rx="2" class="g" stroke-width="1" opacity="0.4"/>
<rect x="1806" y="853" width="10" height="12" rx="2" class="g" stroke-width="1" opacity="0.4"/>
<rect x="1712" y="883" width="10" height="12" rx="2" class="g" stroke-width="1" opacity="0.4"/>
<rect x="1806" y="883" width="10" height="12" rx="2" class="g" stroke-width="1" opacity="0.4"/>
<rect x="1712" y="913" width="10" height="12" rx="2" class="g" stroke-width="1" opacity="0.4"/>
<rect x="1806" y="913" width="10" height="12" rx="2" class="g" stroke-width="1" opacity="0.4"/>
<rect x="1712" y="943" width="10" height="12" rx="2" class="g" stroke-width="1" opacity="0.4"/>
<rect x="1806" y="943" width="10" height="12" rx="2" class="g" stroke-width="1" opacity="0.4"/>
<rect x="1712" y="973" width="10" height="12" rx="2" class="g" stroke-width="1" opacity="0.4"/>
<rect x="1806" y="973" width="10" height="12" rx="2" class="g" stroke-width="1" opacity="0.4"/>
<rect x="1630" y="997" width="28" height="45" rx="0" class="g" stroke-width="1" opacity="0.45"/>
<rect x="1612" y="1003" width="9" height="9" rx="2" class="g" stroke-width="1" opacity="0.4"/>
<rect x="1664" y="1003" width="9" height="9" rx="2" class="g" stroke-width="1" opacity="0.4"/>
<rect x="1612" y="1028" width="9" height="9" rx="2" class="g" stroke-width="1" opacity="0.4"/>
<rect x="1664" y="1028" width="9" height="9" rx="2" class="g" stroke-width="1" opacity="0.4"/>
<rect x="1638" y="978" width="9" height="9" rx="2" class="g" stroke-width="1" opacity="0.4"/>
<rect x="1561" y="938" width="28" height="40" rx="0" class="g" stroke-width="1" opacity="0.4"/>
<rect x="1550" y="946" width="8" height="8" rx="2" class="g" stroke-width="1" opacity="0.35"/>
<rect x="1592" y="946" width="8" height="8" rx="2" class="g" stroke-width="1" opacity="0.35"/>
<rect x="1550" y="964" width="8" height="8" rx="2" class="g" stroke-width="1" opacity="0.35"/>
<rect x="1592" y="964" width="8" height="8" rx="2" class="g" stroke-width="1" opacity="0.35"/>
<rect x="1571" y="926" width="8" height="8" rx="2" class="g" stroke-width="1" opacity="0.35"/>
<rect x="1571" y="982" width="8" height="8" rx="2" class="g" stroke-width="1" opacity="0.35"/>
<rect x="1486" y="998" width="28" height="40" rx="0" class="g" stroke-width="1" opacity="0.4"/>
<rect x="1475" y="1006" width="8" height="8" rx="2" class="g" stroke-width="1" opacity="0.35"/>
<rect x="1517" y="1006" width="8" height="8" rx="2" class="g" stroke-width="1" opacity="0.35"/>
<rect x="1475" y="1024" width="8" height="8" rx="2" class="g" stroke-width="1" opacity="0.35"/>
<rect x="1517" y="1024" width="8" height="8" rx="2" class="g" stroke-width="1" opacity="0.35"/>
<rect x="1496" y="986" width="8" height="8" rx="2" class="g" stroke-width="1" opacity="0.35"/>
<rect x="1496" y="1042" width="8" height="8" rx="2" class="g" stroke-width="1" opacity="0.35"/>
<rect x="1426" y="963" width="28" height="40" rx="0" class="g" stroke-width="1" opacity="0.4"/>
<rect x="1415" y="971" width="8" height="8" rx="2" class="g" stroke-width="1" opacity="0.35"/>
<rect x="1457" y="971" width="8" height="8" rx="2" class="g" stroke-width="1" opacity="0.35"/>
<rect x="1415" y="989" width="8" height="8" rx="2" class="g" stroke-width="1" opacity="0.35"/>
<rect x="1457" y="989" width="8" height="8" rx="2" class="g" stroke-width="1" opacity="0.35"/>
<rect x="1436" y="951" width="8" height="8" rx="2" class="g" stroke-width="1" opacity="0.35"/>
<rect x="1436" y="1007" width="8" height="8" rx="2" class="g" stroke-width="1" opacity="0.35"/>
<rect x="1270" y="898" width="170" height="55" rx="0" class="g" stroke-width="1" opacity="0.25"/>
<line x1="1777" y1="99" x2="1846" y2="99" class="o" stroke-width="1" opacity="0.44"/>
<line x1="1896" y1="689" x2="1917" y2="689" class="g" stroke-width="1" opacity="0.2"/>
<line x1="1917" y1="885" x2="1973" y2="885" class="g" stroke-width="1" opacity="0.27"/>
<line x1="1891" y1="892" x2="1891" y2="926" class="g" stroke-width="1" opacity="0.47"/>
<line x1="1895" y1="798" x2="1895" y2="819" class="g" stroke-width="1" opacity="0.23"/>
<circle cx="1616" cy="471" r="3" class="o" stroke-width="1" opacity="0.24"/>
<line x1="1520" y1="224" x2="1567" y2="189" class="g" stroke-width="1" opacity="0.44"/>
<rect x="1434" y="77" width="15" height="17" rx="0" class="o" stroke-width="1" opacity="0.27"/>
<line x1="1892" y1="509" x2="1941" y2="547" class="g" stroke-width="1" opacity="0.25"/>
<line x1="1839" y1="636" x2="1891" y2="636" class="o" stroke-width="1" opacity="0.21"/>
<line x1="1818" y1="647" x2="1790" y2="640" class="g" stroke-width="1" opacity="0.26"/>
<line x1="1625" y1="139" x2="1648" y2="149" class="o" stroke-width="1" opacity="0.49"/>
<line x1="1327" y1="37" x2="1269" y2="53" class="o" stroke-width="1" opacity="0.41"/>
<line x1="1563" y1="769" x2="1591" y2="817" class="g" stroke-width="1" opacity="0.22"/>
<line x1="1861" y1="370" x2="1896" y2="414" class="g" stroke-width="1" opacity="0.46"/>
<rect x="1625" y="658" width="21" height="30" rx="0" class="g" stroke-width="1" opacity="0.38"/>
<circle cx="1837" cy="767" r="6" class="g" stroke-width="1" opacity="0.37"/>
<rect x="1288" y="790" width="23" height="18" rx="0" class="g" stroke-width="1" opacity="0.34"/>
<line x1="1654" y1="969" x2="1674" y2="969" class="o" stroke-width="1" opacity="0.29"/>
<line x1="1855" y1="695" x2="1819" y2="687" class="o" stroke-width="1" opacity="0.3"/>
<line x1="1495" y1="614" x2="1495" y2="667" class="o" stroke-width="1" opacity="0.35"/>
<rect x="1886" y="291" width="16" height="21" rx="0" class="g" stroke-width="1" opacity="0.28"/>
<line x1="1908" y1="476" x2="1908" y2="521" class="g" stroke-width="1" opacity="0.46"/>
<line x1="1443" y1="833" x2="1443" y2="858" class="g" stroke-width="1" opacity="0.34"/>
<line x1="1787" y1="1009" x2="1825" y2="1009" class="g" stroke-width="1" opacity="0.34"/>
<line x1="1723" y1="189" x2="1723" y2="244" class="g" stroke-width="1" opacity="0.41"/>
<line x1="1858" y1="397" x2="1854" y2="415" class="o" stroke-width="1" opacity="0.44"/>
<line x1="1673" y1="756" x2="1677" y2="791" class="o" stroke-width="1" opacity="0.49"/>
<line x1="1610" y1="809" x2="1610" y2="829" class="g" stroke-width="1" opacity="0.44"/>
<line x1="1461" y1="830" x2="1461" y2="881" class="o" stroke-width="1" opacity="0.35"/>
<line x1="1851" y1="219" x2="1815" y2="224" class="g" stroke-width="1" opacity="0.36"/>
<line x1="1577" y1="637" x2="1613" y2="645" class="g" stroke-width="1" opacity="0.35"/>
<rect x="1569" y="728" width="28" height="12" rx="0" class="o" stroke-width="1" opacity="0.32"/>
<path d="M1551 128L1562 139L1562 128L1551 139Z" class="g" stroke-width="1" opacity="0.47"/>
<line x1="1319" y1="821" x2="1351" y2="821" class="o" stroke-width="1" opacity="0.27"/>
<circle cx="1652" cy="902" r="4" class="o" stroke-width="1" opacity="0.44"/>
<line x1="1447" y1="972" x2="1416" y2="999" class="g" stroke-width="1" opacity="0.47"/>
<line x1="1521" y1="832" x2="1572" y2="832" class="g" stroke-width="1" opacity="0.41"/>
<rect x="1859" y="1020" width="22" height="11" rx="0" class="g" stroke-width="1" opacity="0.43"/>
<rect x="1279" y="112" width="10" height="10" rx="0" class="g" stroke-width="1" opacity="0.35"/>
<line x1="1870" y1="100" x2="1849" y2="96" class="o" stroke-width="1" opacity="0.34"/>
<rect x="1510" y="205" width="25" height="23" rx="0" class="o" stroke-width="1" opacity="0.2"/>
<rect x="1824" y="663" width="25" height="12" rx="0" class="o" stroke-width="1" opacity="0.35"/>
<path d="M1851 776L1866 791L1866 776L1851 791Z" class="o" stroke-width="1" opacity="0.32"/>
<line x1="1510" y1="761" x2="1558" y2="761" class="g" stroke-width="1" opacity="0.34"/>
<line x1="1623" y1="561" x2="1654" y2="619" class="o" stroke-width="1" opacity="0.39"/>
<line x1="1407" y1="423" x2="1471" y2="423" class="g" stroke-width="1" opacity="0.31"/>
<path d="M1784 76L1793 85L1793 76L1784 85Z" class="o" stroke-width="1" opacity="0.21"/>
<line x1="1434" y1="15" x2="1498" y2="15" class="o" stroke-width="1" opacity="0.25"/>
<line x1="1882" y1="77" x2="1923" y2="77" class="o" stroke-width="1" opacity="0.34"/>
<line x1="1877" y1="761" x2="1831" y2="776" class="o" stroke-width="1" opacity="0.45"/>
<rect x="1544" y="214" width="22" height="17" rx="0" class="g" stroke-width="1" opacity="0.24"/>
<line x1="1887" y1="773" x2="1887" y2="805" class="o" stroke-width="1" opacity="0.47"/>
<line x1="1862" y1="925" x2="1862" y2="941" class="g" stroke-width="1" opacity="0.28"/>
<circle cx="1604" cy="76" r="4" class="o" stroke-width="1" opacity="0.37"/>
<circle cx="1560" cy="222" r="3" class="g" stroke-width="1" opacity="0.45"/>
<line x1="1788" y1="657" x2="1788" y2="689" class="g" stroke-width="1" opacity="0.33"/>
<rect x="1681" y="1042" width="16" height="15" rx="0" class="o" stroke-width="1" opacity="0.42"/>
<line x1="1709" y1="298" x2="1761" y2="298" class="g" stroke-width="1" opacity="0.42"/>
<line x1="1860" y1="461" x2="1860" y2="525" class="g" stroke-width="1" opacity="0.3"/>
<rect x="1679" y="847" width="8" height="24" rx="0" class="g" stroke-width="1" opacity="0.44"/>
<line x1="1850" y1="89" x2="1874" y2="89" class="o" stroke-width="1" opacity="0.42"/>
<circle cx="1694" cy="520" r="5" class="o" stroke-width="1" opacity="0.41"/>
<circle cx="1891" cy="674" r="5" class="g" stroke-width="1" opacity="0.44"/>
<line x1="1489" y1="177" x2="1518" y2="177" class="o" stroke-width="1" opacity="0.29"/>
<line x1="1633" y1="957" x2="1686" y2="957" class="g" stroke-width="1" opacity="0.26"/>
<line x1="1640" y1="236" x2="1683" y2="236" class="o" stroke-width="1" opacity="0.25"/>
<line x1="1794" y1="505" x2="1800" y2="560" class="g" stroke-width="1" opacity="0.47"/>
<line x1="1563" y1="233" x2="1566" y2="235" class="g" stroke-width="1" opacity="0.44"/>
<line x1="1648" y1="166" x2="1648" y2="214" class="o" stroke-width="1" opacity="0.28"/>
<line x1="1915" y1="281" x2="1915" y2="341" class="g" stroke-width="1" opacity="0.43"/>
<circle cx="1797" cy="87" r="5" class="g" stroke-width="1" opacity="0.23"/>
<line x1="1889" y1="618" x2="1889" y2="633" class="g" stroke-width="1" opacity="0.44"/>
<rect x="1800" y="219" width="13" height="13" rx="0" class="o" stroke-width="1" opacity="0.25"/>
<line x1="1723" y1="379" x2="1723" y2="439" class="g" stroke-width="1" opacity="0.32"/>
<circle cx="1681" cy="13" r="5" class="g" stroke-width="1" opacity="0.27"/>
<line x1="1489" y1="568" x2="1511" y2="568" class="o" stroke-width="1" opacity="0.32"/>
<path d="M1614 758L1623 767L1623 758L1614 767Z" class="g" stroke-width="1" opacity="0.23"/>
<line x1="1698" y1="746" x2="1721" y2="746" class="g" stroke-width="1" opacity="0.45"/>
<line x1="1797" y1="406" x2="1797" y2="475" class="g" stroke-width="1" opacity="0.2"/>
<line x1="1775" y1="695" x2="1775" y2="712" class="g" stroke-width="1" opacity="0.3"/>
<path d="M1794 638L1805 649L1805 638L1794 649Z" class="g" stroke-width="1" opacity="0.47"/>
<path d="M1904 537L1917 550L1917 537L1904 550Z" class="o" stroke-width="1" opacity="0.26"/>
<line x1="1628" y1="734" x2="1583" y2="791" class="g" stroke-width="1" opacity="0.31"/>
<line x1="1617" y1="590" x2="1629" y2="545" class="o" stroke-width="1" opacity="0.5"/>
<line x1="1358" y1="577" x2="1358" y2="626" class="o" stroke-width="1" opacity="0.25"/>
<line x1="1892" y1="632" x2="1892" y2="687" class="o" stroke-width="1" opacity="0.39"/>
<rect x="1820" y="431" width="19" height="16" rx="0" class="g" stroke-width="1" opacity="0.47"/>
<circle cx="1854" cy="338" r="5" class="o" stroke-width="1" opacity="0.47"/>
<line x1="1749" y1="321" x2="1749" y2="355" class="g" stroke-width="1" opacity="0.24"/>
<line x1="1897" y1="701" x2="1897" y2="745" class="g" stroke-width="1" opacity="0.44"/>
<line x1="1853" y1="104" x2="1878" y2="104" class="o" stroke-width="1" opacity="0.36"/>
<line x1="1436" y1="342" x2="1419" y2="352" class="g" stroke-width="1" opacity="0.44"/>
<line x1="1904" y1="498" x2="1965" y2="498" class="o" stroke-width="1" opacity="0.48"/>
<line x1="1474" y1="498" x2="1490" y2="461" class="g" stroke-width="1" opacity="0.5"/>
<circle cx="1837" cy="53" r="6" class="o" stroke-width="1" opacity="0.29"/>
<line x1="1877" y1="469" x2="1898" y2="469" class="o" stroke-width="1" opacity="0.29"/>
<line x1="1637" y1="241" x2="1654" y2="192" class="g" stroke-width="1" opacity="0.4"/>
<rect x="1908" y="464" width="13" height="12" rx="0" class="g" stroke-width="1" opacity="0.21"/>
<path d="M1778 86L1790 98L1790 86L1778 98Z" class="g" stroke-width="1" opacity="0.27"/>
<path d="M1645 243L1655 253L1655 243L1645 253Z" class="o" stroke-width="1" opacity="0.44"/>
<rect x="1354" y="160" width="12" height="25" rx="0" class="g" stroke-width="1" opacity="0.33"/>
<line x1="1605" y1="834" x2="1652" y2="834" class="g" stroke-width="1" opacity="0.29"/>
<line x1="1803" y1="828" x2="1803" y2="841" class="g" stroke-width="1" opacity="0.31"/>
<line x1="1523" y1="81" x2="1490" y2="51" class="o" stroke-width="1" opacity="0.43"/>
<line x1="1611" y1="254" x2="1669" y2="268" class="g" stroke-width="1" opacity="0.31"/>
<line x1="1493" y1="823" x2="1515" y2="823" class="g" stroke-width="1" opacity="0.26"/>
<line x1="1825" y1="215" x2="1836" y2="215" class="g" stroke-width="1" opacity="0.41"/>
<line x1="1867" y1="753" x2="1923" y2="753" class="o" stroke-width="1" opacity="0.25"/>
<line x1="1729" y1="955" x2="1729" y2="985" class="g" stroke-width="1" opacity="0.32"/>
<line x1="1762" y1="547" x2="1808" y2="547" class="g" stroke-width="1" opacity="0.27"/>
<line x1="1722" y1="427" x2="1703" y2="393" class="g" stroke-width="1" opacity="0.27"/>
<circle cx="1889" cy="914" r="5" class="g" stroke-width="1" opacity="0.23"/>
<line x1="1573" y1="295" x2="1573" y2="319" class="g" stroke-width="1" opacity="0.34"/>
<line x1="1612" y1="737" x2="1625" y2="737" class="g" stroke-width="1" opacity="0.31"/>
<line x1="1455" y1="267" x2="1505" y2="267" class="g" stroke-width="1" opacity="0.47"/>
<line x1="1889" y1="382" x2="1903" y2="371" class="o" stroke-width="1" opacity="0.43"/>
<rect x="1699" y="247" width="18" height="22" rx="0" class="g" stroke-width="1" opacity="0.32"/>
<line x1="1803" y1="1020" x2="1803" y2="1072" class="g" stroke-width="1" opacity="0.47"/>
<circle cx="1619" cy="389" r="4" class="g" stroke-width="1" opacity="0.36"/>
<line x1="1317" y1="67" x2="1373" y2="67" class="g" stroke-width="1" opacity="0.41"/>
<rect x="1830" y="56" width="23" height="12" rx="0" class="g" stroke-width="1" opacity="0.44"/>
<path d="M1718 338L1730 350L1730 338L1718 350Z" class="o" stroke-width="1" opacity="0.45"/>
<line x1="1803" y1="844" x2="1814" y2="844" class="g" stroke-width="1" opacity="0.4"/>
<line x1="1912" y1="51" x2="1912" y2="121" class="g" stroke-width="1" opacity="0.21"/>
<rect x="1313" y="348" width="13" height="25" rx="0" class="g" stroke-width="1" opacity="0.34"/>
<rect x="1809" y="299" width="15" height="23" rx="0" class="o" stroke-width="1" opacity="0.43"/>
<line x1="1607" y1="843" x2="1646" y2="843" class="o" stroke-width="1" opacity="0.23"/>
<rect x="1313" y="341" width="13" height="11" rx="0" class="o" stroke-width="1" opacity="0.24"/>
<line x1="1563" y1="385" x2="1577" y2="385" class="o" stroke-width="1" opacity="0.22"/>
<path d="M1822 1043L1831 1051L1831 1043L1822 1051Z" class="g" stroke-width="1" opacity="0.42"/>
<line x1="1347" y1="125" x2="1347" y2="136" class="g" stroke-width="1" opacity="0.43"/>
<rect x="1375" y="1010" width="24" height="16" rx="0" class="o" stroke-width="1" opacity="0.44"/>
<line x1="1784" y1="872" x2="1772" y2="896" class="o" stroke-width="1" opacity="0.23"/>
<rect x="1403" y="958" width="15" height="22" rx="0" class="g" stroke-width="1" opacity="0.27"/>
<line x1="1789" y1="384" x2="1805" y2="384" class="o" stroke-width="1" opacity="0.28"/>
<circle cx="1461" cy="781" r="4" class="o" stroke-width="1" opacity="0.36"/>
<line x1="1887" y1="216" x2="1887" y2="251" class="g" stroke-width="1" opacity="0.43"/>
<circle cx="1894" cy="231" r="6" class="g" stroke-width="1" opacity="0.25"/>
<line x1="1884" y1="339" x2="1884" y2="372" class="g" stroke-width="1" opacity="0.5"/>
<rect x="1842" y="902" width="26" height="23" rx="0" class="g" stroke-width="1" opacity="0.37"/>
<circle cx="1625" cy="543" r="5" class="g" stroke-width="1" opacity="0.33"/>
<line x1="1873" y1="160" x2="1901" y2="219" class="g" stroke-width="1" opacity="0.42"/>
<line x1="1507" y1="913" x2="1548" y2="931" class="g" stroke-width="1" opacity="0.35"/>
<rect x="1877" y="873" width="27" height="23" rx="0" class="g" stroke-width="1" opacity="0.5"/>
<line x1="1600" y1="911" x2="1600" y2="969" class="g" stroke-width="1" opacity="0.39"/>
<line x1="1820" y1="812" x2="1804" y2="764" class="g" stroke-width="1" opacity="0.44"/>
<line x1="1805" y1="124" x2="1805" y2="138" class="o" stroke-width="1" opacity="0.45"/>
<line x1="1912" y1="218" x2="1932" y2="209" class="g" stroke-width="1" opacity="0.42"/>
<circle cx="1709" cy="190" r="3" class="g" stroke-width="1" opacity="0.34"/>
<line x1="1879" y1="642" x2="1879" y2="674" class="o" stroke-width="1" opacity="0.5"/>
<circle cx="1444" cy="430" r="5" class="o" stroke-width="1" opacity="0.33"/>
<rect x="1469" y="741" width="13" height="27" rx="0" class="o" stroke-width="1" opacity="0.29"/>
<line x1="1399" y1="433" x2="1380" y2="472" class="g" stroke-width="1" opacity="0.28"/>
<line x1="1817" y1="622" x2="1849" y2="622" class="g" stroke-width="1" opacity="0.47"/>
<line x1="1729" y1="705" x2="1745" y2="701" class="g" stroke-width="1" opacity="0.48"/>
<circle cx="1480" cy="489" r="7" class="o" stroke-width="1" opacity="0.38"/>
<circle cx="1915" cy="416" r="3" class="o" stroke-width="1" opacity="0.41"/>
<circle cx="1742" cy="88" r="4" class="o" stroke-width="1" opacity="0.39"/>
<line x1="1790" y1="770" x2="1790" y2="836" class="g" stroke-width="1" opacity="0.34"/>
<rect x="1848" y="25" width="25" height="13" rx="0" class="g" stroke-width="1" opacity="0.36"/>
<line x1="1433" y1="819" x2="1476" y2="819" class="g" stroke-width="1" opacity="0.22"/>
<line x1="1547" y1="896" x2="1550" y2="885" class="o" stroke-width="1" opacity="0.25"/>
<path d="M1511 7L1520 16L1520 7L1511 16Z" class="o" stroke-width="1" opacity="0.42"/>
<line x1="1596" y1="30" x2="1596" y2="43" class="o" stroke-width="1" opacity="0.49"/>
<line x1="1517" y1="83" x2="1566" y2="83" class="g" stroke-width="1" opacity="0.48"/>
<rect x="1842" y="997" width="13" height="24" rx="0" class="g" stroke-width="1" opacity="0.47"/>
<rect x="1559" y="377" width="7" height="19" rx="0" class="o" stroke-width="1" opacity="0.21"/>
<line x1="1608" y1="421" x2="1632" y2="421" class="g" stroke-width="1" opacity="0.31"/>
<line x1="1747" y1="513" x2="1747" y2="581" class="g" stroke-width="1" opacity="0.49"/>
<line x1="1750" y1="56" x2="1812" y2="56" class="o" stroke-width="1" opacity="0.28"/>
<path d="M1768 670L1780 683L1780 670L1768 683Z" class="o" stroke-width="1" opacity="0.21"/>
<line x1="1870" y1="673" x2="1811" y2="701" class="g" stroke-width="1" opacity="0.43"/>
<line x1="1863" y1="79" x2="1899" y2="79" class="g" stroke-width="1" opacity="0.43"/>
<line x1="1690" y1="577" x2="1690" y2="643" class="o" stroke-width="1" opacity="0.29"/>
<line x1="1556" y1="33" x2="1607" y2="33" class="o" stroke-width="1" opacity="0.4"/>
<circle cx="1498" cy="820" r="4" class="g" stroke-width="1" opacity="0.25"/>
<rect x="1638" y="548" width="20" height="18" rx="0" class="g" stroke-width="1" opacity="0.45"/>
<line x1="1907" y1="345" x2="1907" y2="371" class="o" stroke-width="1" opacity="0.28"/>
<rect x="1724" y="456" width="17" height="18" rx="0" class="o" stroke-width="1" opacity="0.49"/>
<line x1="1390" y1="793" x2="1390" y2="837" class="g" stroke-width="1" opacity="0.45"/>
<line x1="1611" y1="351" x2="1562" y2="385" class="o" stroke-width="1" opacity="0.43"/>
<line x1="1732" y1="279" x2="1757" y2="279" class="g" stroke-width="1" opacity="0.36"/>
<line x1="1833" y1="169" x2="1861" y2="173" class="g" stroke-width="1" opacity="0.38"/>
<rect x="1480" y="829" width="29" height="18" rx="0" class="o" stroke-width="1" opacity="0.31"/>
<line x1="1621" y1="367" x2="1639" y2="316" class="o" stroke-width="1" opacity="0.23"/>
<line x1="1852" y1="107" x2="1852" y2="121" class="g" stroke-width="1" opacity="0.5"/>
<rect x="1690" y="71" width="27" height="25" rx="0" class="o" stroke-width="1" opacity="0.49"/>
<rect x="1518" y="512" width="19" height="9" rx="0" class="o" stroke-width="1" opacity="0.37"/>
<line x1="1703" y1="645" x2="1758" y2="589" class="g" stroke-width="1" opacity="0.23"/>
<path d="M1701 543L1709 552L1709 543L1701 552Z" class="g" stroke-width="1" opacity="0.44"/>
<line x1="1511" y1="353" x2="1511" y2="395" class="g" stroke-width="1" opacity="0.43"/>
<line x1="1392" y1="929" x2="1392" y2="959" class="g" stroke-width="1" opacity="0.28"/>
<path d="M1770 563L1781 574L1781 563L1770 574Z" class="g" stroke-width="1" opacity="0.27"/>
<line x1="1913" y1="390" x2="1869" y2="425" class="g" stroke-width="1" opacity="0.5"/>
<line x1="1543" y1="392" x2="1574" y2="392" class="g" stroke-width="1" opacity="0.48"/>
<line x1="1622" y1="803" x2="1571" y2="780" class="g" stroke-width="1" opacity="0.22"/>
<line x1="1755" y1="973" x2="1812" y2="973" class="g" stroke-width="1" opacity="0.3"/>
<path d="M1893 476L1909 492L1909 476L1893 492Z" class="g" stroke-width="1" opacity="0.34"/>
<line x1="1905" y1="26" x2="1959" y2="26" class="g" stroke-width="1" opacity="0.22"/>
<rect x="1781" y="526" width="13" height="7" rx="0" class="g" stroke-width="1" opacity="0.25"/>
<line x1="1556" y1="657" x2="1599" y2="657" class="g" stroke-width="1" opacity="0.47"/>
<line x1="1839" y1="171" x2="1865" y2="139" class="g" stroke-width="1" opacity="0.29"/>
<line x1="1867" y1="541" x2="1867" y2="589" class="g" stroke-width="1" opacity="0.35"/>
<path d="M1416 459L1430 473L1430 459L1416 473Z" class="o" stroke-width="1" opacity="0.27"/>
<path d="M1563 503L1573 513L1573 503L1563 513Z" class="g" stroke-width="1" opacity="0.35"/>
<path d="M1898 959L1912 973L1912 959L1898 973Z" class="o" stroke-width="1" opacity="0.41"/>
<rect x="1398" y="968" width="21" height="28" rx="0" class="o" stroke-width="1" opacity="0.3"/>
<circle cx="1873" cy="678" r="6" class="o" stroke-width="1" opacity="0.23"/>
<line x1="1753" y1="1037" x2="1753" y2="1093" class="g" stroke-width="1" opacity="0.42"/>
<line x1="1772" y1="920" x2="1758" y2="902" class="g" stroke-width="1" opacity="0.39"/>
<line x1="1709" y1="543" x2="1709" y2="610" class="o" stroke-width="1" opacity="0.26"/>
<line x1="1894" y1="815" x2="1956" y2="815" class="g" stroke-width="1" opacity="0.36"/>
<line x1="1397" y1="345" x2="1397" y2="393" class="g" stroke-width="1" opacity="0.31"/>
<rect x="1516" y="428" width="16" height="22" rx="0" class="g" stroke-width="1" opacity="0.49"/>
<line x1="1756" y1="584" x2="1761" y2="644" class="g" stroke-width="1" opacity="0.47"/>
<line x1="1717" y1="481" x2="1717" y2="494" class="o" stroke-width="1" opacity="0.34"/>
<circle cx="1625" cy="784" r="3" class="o" stroke-width="1" opacity="0.4"/>
<rect x="1720" y="135" width="15" height="17" rx="0" class="g" stroke-width="1" opacity="0.21"/>
<line x1="1566" y1="619" x2="1532" y2="663" class="g" stroke-width="1" opacity="0.24"/>
<line x1="1581" y1="432" x2="1606" y2="426" class="o" stroke-width="1" opacity="0.28"/>
<circle cx="1772" cy="423" r="7" class="o" stroke-width="1" opacity="0.29"/>
<circle cx="1682" cy="704" r="5" class="o" stroke-width="1" opacity="0.27"/>
<line x1="1906" y1="360" x2="1953" y2="360" class="o" stroke-width="1" opacity="0.32"/>
<rect x="1366" y="961" width="15" height="20" rx="0" class="o" stroke-width="1" opacity="0.45"/>
<rect x="1731" y="1001" width="10" height="21" rx="0" class="g" stroke-width="1" opacity="0.36"/>
<path d="M1840 692L1853 705L1853 692L1840 705Z" class="g" stroke-width="1" opacity="0.33"/>
<path d="M1616 997L1630 1011L1630 997L1616 1011Z" class="g" stroke-width="1" opacity="0.22"/>
<line x1="1706" y1="872" x2="1739" y2="872" class="g" stroke-width="1" opacity="0.31"/>
<line x1="1683" y1="156" x2="1645" y2="111" class="g" stroke-width="1" opacity="0.48"/>
<rect x="1463" y="925" width="25" height="20" rx="0" class="g" stroke-width="1" opacity="0.29"/>
<line x1="1650" y1="1039" x2="1650" y2="1070" class="g" stroke-width="1" opacity="0.39"/>
<line x1="1862" y1="713" x2="1862" y2="775" class="g" stroke-width="1" opacity="0.41"/>
<line x1="1632" y1="100" x2="1632" y2="114" class="o" stroke-width="1" opacity="0.5"/>
<line x1="1710" y1="339" x2="1735" y2="339" class="g" stroke-width="1" opacity="0.37"/>
<line x1="1432" y1="275" x2="1492" y2="275" class="g" stroke-width="1" opacity="0.38"/>
<line x1="1554" y1="539" x2="1573" y2="562" class="o" stroke-width="1" opacity="0.43"/>
<rect x="1575" y="435" width="19" height="25" rx="0" class="g" stroke-width="1" opacity="0.34"/>
<line x1="1846" y1="236" x2="1846" y2="263" class="o" stroke-width="1" opacity="0.21"/>
<line x1="1806" y1="78" x2="1784" y2="122" class="g" stroke-width="1" opacity="0.36"/>
<line x1="1587" y1="1043" x2="1573" y2="1060" class="g" stroke-width="1" opacity="0.2"/>
<line x1="1632" y1="182" x2="1625" y2="188" class="g" stroke-width="1" opacity="0.4"/>
<line x1="1792" y1="763" x2="1814" y2="763" class="o" stroke-width="1" opacity="0.21"/>
<path d="M1885 332L1898 345L1898 332L1885 345Z" class="o" stroke-width="1" opacity="0.26"/>
<line x1="1875" y1="46" x2="1875" y2="67" class="g" stroke-width="1" opacity="0.45"/>
<line x1="1572" y1="1020" x2="1593" y2="1020" class="o" stroke-width="1" opacity="0.48"/>
<circle cx="1713" cy="1032" r="5" class="o" stroke-width="1" opacity="0.31"/>
<line x1="1596" y1="51" x2="1554" y2="62" class="g" stroke-width="1" opacity="0.31"/>
<rect x="1861" y="190" width="12" height="11" rx="0" class="g" stroke-width="1" opacity="0.43"/>
<path d="M1805 645L1820 660L1820 645L1805 660Z" class="g" stroke-width="1" opacity="0.42"/>
<line x1="1332" y1="171" x2="1345" y2="171" class="g" stroke-width="1" opacity="0.46"/>
<rect x="1672" y="177" width="20" height="18" rx="0" class="g" stroke-width="1" opacity="0.31"/>
<rect x="1498" y="499" width="6" height="27" rx="0" class="g" stroke-width="1" opacity="0.26"/>
<line x1="1635" y1="413" x2="1660" y2="398" class="g" stroke-width="1" opacity="0.24"/>
<line x1="1718" y1="956" x2="1718" y2="1008" class="o" stroke-width="1" opacity="0.29"/>
<line x1="1868" y1="196" x2="1926" y2="224" class="g" stroke-width="1" opacity="0.43"/>
<line x1="1827" y1="381" x2="1874" y2="441" class="g" stroke-width="1" opacity="0.47"/>
<circle cx="1321" cy="822" r="5" class="g" stroke-width="1" opacity="0.28"/>
<circle cx="1911" cy="276" r="4" class="o" stroke-width="1" opacity="0.26"/>
<line x1="1614" y1="357" x2="1684" y2="357" class="g" stroke-width="1" opacity="0.2"/>
<line x1="1821" y1="985" x2="1821" y2="1023" class="g" stroke-width="1" opacity="0.32"/>
<line x1="1897" y1="214" x2="1951" y2="214" class="g" stroke-width="1" opacity="0.21"/>
<rect x="1270" y="104" width="19" height="27" rx="0" class="o" stroke-width="1" opacity="0.45"/>
<rect x="1733" y="931" width="29" height="13" rx="0" class="o" stroke-width="1" opacity="0.46"/>
<line x1="1764" y1="666" x2="1764" y2="707" class="g" stroke-width="1" opacity="0.34"/>
<rect x="1582" y="62" width="25" height="13" rx="0" class="o" stroke-width="1" opacity="0.4"/>
<line x1="1505" y1="505" x2="1454" y2="527" class="g" stroke-width="1" opacity="0.21"/>
<line x1="1645" y1="804" x2="1656" y2="804" class="o" stroke-width="1" opacity="0.31"/>
<line x1="1841" y1="509" x2="1892" y2="509" class="o" stroke-width="1" opacity="0.47"/>
<line x1="1329" y1="822" x2="1329" y2="879" class="g" stroke-width="1" opacity="0.4"/>
<line x1="1374" y1="677" x2="1352" y2="704" class="o" stroke-width="1" opacity="0.48"/>
<rect x="1853" y="837" width="29" height="27" rx="0" class="g" stroke-width="1" opacity="0.24"/>
<line x1="1732" y1="488" x2="1781" y2="488" class="o" stroke-width="1" opacity="0.25"/>
<line x1="1482" y1="388" x2="1506" y2="400" class="g" stroke-width="1" opacity="0.38"/>
<circle cx="1835" cy="1021" r="4" class="g" stroke-width="1" opacity="0.31"/>
<path d="M1669 364L1684 379L1684 364L1669 379Z" class="o" stroke-width="1" opacity="0.44"/>
<line x1="1496" y1="677" x2="1496" y2="705" class="o" stroke-width="1" opacity="0.23"/>
<circle cx="1491" cy="123" r="4" class="g" stroke-width="1" opacity="0.47"/>
<line x1="1473" y1="499" x2="1473" y2="510" class="g" stroke-width="1" opacity="0.33"/>
<line x1="1671" y1="845" x2="1671" y2="891" class="g" stroke-width="1" opacity="0.24"/>
<line x1="1867" y1="914" x2="1867" y2="930" class="g" stroke-width="1" opacity="0.44"/>
<line x1="1914" y1="609" x2="1911" y2="642" class="o" stroke-width="1" opacity="0.43"/>
<line x1="1692" y1="166" x2="1692" y2="211" class="o" stroke-width="1" opacity="0.35"/>
<line x1="1774" y1="869" x2="1774" y2="898" class="g" stroke-width="1" opacity="0.21"/>
<rect x="1813" y="846" width="8" height="12" rx="0" class="o" stroke-width="1" opacity="0.23"/>
<line x1="1760" y1="622" x2="1786" y2="622" class="g" stroke-width="1" opacity="0.36"/>
<line x1="1696" y1="112" x2="1765" y2="112" class="g" stroke-width="1" opacity="0.36"/>
<path d="M1799 393L1813 407L1813 393L1799 407Z" class="g" stroke-width="1" opacity="0.49"/>
<line x1="1794" y1="987" x2="1794" y2="1051" class="g" stroke-width="1" opacity="0.25"/>
<line x1="1557" y1="134" x2="1557" y2="170" class="o" stroke-width="1" opacity="0.39"/>
<rect x="1545" y="493" width="14" height="20" rx="0" class="o" stroke-width="1" opacity="0.41"/>
<line x1="1478" y1="34" x2="1507" y2="34" class="o" stroke-width="1" opacity="0.48"/>
<rect x="1484" y="328" width="10" height="9" rx="0" class="g" stroke-width="1" opacity="0.45"/>
<line x1="1730" y1="833" x2="1730" y2="861" class="o" stroke-width="1" opacity="0.29"/>
<line x1="1368" y1="847" x2="1368" y2="870" class="o" stroke-width="1" opacity="0.33"/>
<line x1="1850" y1="911" x2="1916" y2="911" class="g" stroke-width="1" opacity="0.29"/>
<line x1="1641" y1="863" x2="1654" y2="863" class="g" stroke-width="1" opacity="0.42"/>
<line x1="1506" y1="595" x2="1539" y2="595" class="g" stroke-width="1" opacity="0.4"/>
<rect x="1436" y="121" width="15" height="17" rx="0" class="o" stroke-width="1" opacity="0.21"/>
<path d="M1587 20L1598 31L1598 20L1587 31Z" class="g" stroke-width="1" opacity="0.37"/>
<circle cx="1807" cy="941" r="5" class="g" stroke-width="1" opacity="0.34"/>
<rect x="1643" y="956" width="10" height="20" rx="0" class="o" stroke-width="1" opacity="0.31"/>
<line x1="1836" y1="818" x2="1903" y2="818" class="o" stroke-width="1" opacity="0.41"/>
<line x1="1594" y1="35" x2="1594" y2="53" class="o" stroke-width="1" opacity="0.23"/>
<path d="M1873 975L1885 987L1885 975L1873 987Z" class="g" stroke-width="1" opacity="0.27"/>
<line x1="1674" y1="638" x2="1625" y2="604" class="g" stroke-width="1" opacity="0.29"/>
<line x1="1734" y1="885" x2="1734" y2="911" class="o" stroke-width="1" opacity="0.27"/>
<rect x="1759" y="536" width="21" height="10" rx="0" class="g" stroke-width="1" opacity="0.4"/>
<line x1="1900" y1="223" x2="1941" y2="264" class="o" stroke-width="1" opacity="0.49"/>
<circle cx="1797" cy="597" r="3" class="o" stroke-width="1" opacity="0.45"/>
<circle cx="1847" cy="1043" r="4" class="o" stroke-width="1" opacity="0.4"/>
<line x1="1729" y1="845" x2="1729" y2="862" class="o" stroke-width="1" opacity="0.34"/>
<line x1="1735" y1="646" x2="1786" y2="646" class="o" stroke-width="1" opacity="0.22"/>
<path d="M1851 695L1867 711L1867 695L1851 711Z" class="o" stroke-width="1" opacity="0.49"/>
<line x1="1661" y1="1038" x2="1657" y2="1085" class="o" stroke-width="1" opacity="0.43"/>
<line x1="1504" y1="12" x2="1555" y2="12" class="g" stroke-width="1" opacity="0.5"/>
<line x1="1414" y1="563" x2="1414" y2="615" class="o" stroke-width="1" opacity="0.29"/>
<line x1="1810" y1="1042" x2="1810" y2="1060" class="o" stroke-width="1" opacity="0.37"/>
<line x1="1898" y1="537" x2="1919" y2="509" class="g" stroke-width="1" opacity="0.32"/>
</g>
</svg>
</div>
<div id="panel">
<div class="t" style="left:12px;letter-spacing:0.2px">Activities</div>
<div class="t" style="left:129px;letter-spacing:0.4px">Terminal</div>
<div class="t" style="left:913px">Feb</div>
<div class="t" style="left:941px">19</div>
<div class="t" style="left:966px;letter-spacing:0.5px">14:37</div>
<svg width="1920" height="27">
 <g fill="none" stroke="#dedede">
  <rect x="108.2" y="6.2" width="13.6" height="12.6" rx="1.8" stroke-width="2"/>
  <path d="M111 10.8 L113.2 13.2 L111 15.6" stroke-width="1.3"/>
  <path d="M114.8 15.6 H118.2" stroke-width="1.2"/>
 </g>
 <path d="M194 11 H204 L199 16 Z" fill="#dedede"/>
 <path d="M1895 11 H1905 L1900 16 Z" fill="#dedede"/>
 <g fill="none" stroke-linecap="butt">
  <path d="M1814.80 10.41 A9.8 9.8 0 0 1 1827.20 10.41" stroke="#4d4d4d" stroke-width="2.5"/>
  <path d="M1816.80 12.53 A6.9 6.9 0 0 1 1825.20 12.53" stroke="#d8d8d8" stroke-width="2.1"/>
  <path d="M1818.50 14.88 A4.0 4.0 0 0 1 1823.50 14.88" stroke="#d8d8d8" stroke-width="1.8"/>
 </g>
 <circle cx="1821" cy="18" r="2" fill="#d8d8d8"/>
 <path d="M1841 9.8 H1844 L1847.2 6.8 V19.2 L1844 16.2 H1841 Z" fill="#d2d2d2"/>
 <g fill="none" stroke-linecap="round">
 <path d="M1848.6 10.3 Q1850.2 13 1848.6 15.7" stroke="#d2d2d2" stroke-width="1.6"/>
 <path d="M1850.6 8.4 Q1853.2 13 1850.6 17.6" stroke="#d2d2d2" stroke-width="1.7"/>
 <path d="M1852.8 6.6 Q1856.6 13 1852.8 19.4" stroke="#4a4a4a" stroke-width="1.9"/>
 </g>
 <path d="M1873.8 6 V8 H1871.9 V20 H1882.1 V8 H1880.1 V6 Z" fill="none" stroke="#dcdcdc" stroke-width="2"/>
 <path d="M1878.4 10.6 L1875.6 13.9 H1878.3 L1875.5 17.3" fill="none" stroke="#dcdcdc" stroke-width="1.7" stroke-linecap="round" stroke-linejoin="round"/>
</svg>
</div>
<div id="win">
<div id="hb">
<div class="btn" style="left:6px"></div>
<div id="title">lkocman@localhost:~</div>
<div class="btn" style="left:1163px"></div>
<div class="btn" style="left:1205px"></div>
<svg id="hbsvg" width="1294" height="47">
 <g fill="none" stroke="#2e3436">
  <path d="M18 29 V19.2 Q18 17 20.2 17 H27.8 Q30 17 30 19.2 V29" stroke-width="2"/>
  <path d="M16 29 H32" stroke-width="2"/>
  <path d="M21.1 23 H26.9 M24 20.1 V25.9" stroke-width="1.8"/>
  <circle cx="1179.5" cy="21.3" r="4.45" stroke-width="2"/>
  <path d="M1182.7 24.6 L1187.6 29.4" stroke-width="2.2"/>
  <path d="M1217.8 18.9 H1228 M1217.8 22.9 H1228 M1217.8 26.9 H1228" stroke-width="1.9"/>
  <path d="M1267.5 19.5 L1274.5 26.5 M1274.5 19.5 L1267.5 26.5" stroke-width="1.9"/>
 </g>
</svg>
</div>
<div id="term"><pre>lkocman@localhost:~&gt; sudo snapper list
  # | Type   | Pre # | Date                            | User | Used Space | Cleanup | Description             | Userdata
<span style="position:relative;top:-1px">----+--------+-------+---------------------------------+------+------------+---------+-------------------------+--------------</span>
 0  | single |       |                                 | root |            |         | current                 |
 7  | pre    |       | Fri 19 Feb 2021 12:53:23 PM CET | root | 183.98 MiB | number  | zypp(zypper)            | important=yes
 8  | post   |     7 | Fri 19 Feb 2021 12:53:47 PM CET | root |  10.14 MiB | number  |                         | important=yes
17  | pre    |       | Fri 19 Feb 2021 01:13:57 PM CET | root | 192.00 KiB | number  | before online migration | important=yes
18  | post   |    17 | Fri 19 Feb 2021 01:14:09 PM CET | root | 176.00 KiB | number  | after online migration  | important=yes
19  | pre    |       | Fri 19 Feb 2021 01:14:22 PM CET | root | 176.00 KiB | number  | before online migration | important=yes
20  | pre    |       | Fri 19 Feb 2021 01:16:27 PM CET | root |   1.25 MiB | number  | before online migration | important=yes
23  | single |       | Fri 19 Feb 2021 01:19:04 PM CET | root |   2.36 MiB | number  | rollback backup of #1   | important=yes
24  | single |       | Fri 19 Feb 2021 01:19:04 PM CET | root | 352.00 KiB | number  | writable copy of #17    |
27  | pre    |       | Fri 19 Feb 2021 01:20:29 PM CET | root | 176.00 KiB | number  | before online migration | important=yes
28  | pre    |       | Fri 19 Feb 2021 01:21:14 PM CET | root | 176.00 KiB | number  | before online migration | important=yes
29  | pre    |       | Fri 19 Feb 2021 01:53:09 PM CET | root | 316.00 KiB | number  | zypp(zypper)            | important=no
30  | post   |    29 | Fri 19 Feb 2021 01:53:14 PM CET | root |   2.33 MiB | number  |                         | important=no
31  | pre    |       | Fri 19 Feb 2021 01:55:39 PM CET | root | 348.00 KiB | number  | zypp(zypper)            | important=no
32  | post   |    31 | Fri 19 Feb 2021 01:56:00 PM CET | root |   4.81 MiB | number  |                         | important=no
33  | single |       | Fri 19 Feb 2021 01:57:49 PM CET | root | 128.00 KiB | number  | rollback backup of #24  | important=yes
34* | single |       | Fri 19 Feb 2021 01:57:49 PM CET | root | 640.00 KiB |         | writable copy of #17    |
35  | pre    |       | Fri 19 Feb 2021 02:14:39 PM CET | root | 852.00 KiB | number  | zypp(zypper)            | important=no
36  | post   |    35 | Fri 19 Feb 2021 02:15:01 PM CET | root |   5.43 MiB | number  |                         | important=no
37  | pre    |       | Fri 19 Feb 2021 02:15:12 PM CET | root | 144.00 KiB | number  | yast register           |
38  | post   |    37 | Fri 19 Feb 2021 02:15:13 PM CET | root | 128.00 KiB | number  |                         |
39  | pre    |       | Fri 19 Feb 2021 02:15:16 PM CET | root | 128.00 KiB | number  | yast registration       |
40  | post   |    39 | Fri 19 Feb 2021 02:15:24 PM CET | root | 240.00 KiB | number  |                         |
41  | pre    |       | Fri 19 Feb 2021 02:15:29 PM CET | root |  96.00 KiB | number  | before online migration | important=yes
42  | pre    |       | Fri 19 Feb 2021 02:16:20 PM CET | root | 160.00 KiB | number  | yast registration       |
43  | post   |    42 | Fri 19 Feb 2021 02:16:28 PM CET | root | 112.00 KiB | number  |                         |
44  | pre    |       | Fri 19 Feb 2021 02:29:14 PM CET | root | 128.00 KiB | number  | before online migration | important=yes
45  | pre    |       | Fri 19 Feb 2021 02:32:47 PM CET | root | 176.00 KiB | number  | before online migration | important=yes
46  | pre    |       | Fri 19 Feb 2021 02:32:54 PM CET | root | 176.00 KiB | number  | before online migration | important=yes
lkocman@localhost:~&gt; sudo snapper rollback 44
Ambit is classic.
Creating read-only snapshot of current system. (Snapshot 47.)
Creating read-write snapshot of snapshot 44. (Snapshot 48.)
Setting default subvolume to snapshot 48.
lkocman@localhost:~&gt; </pre><div id="cur"></div></div>
<div id="sb"><div id="thumb"></div></div>
</div>
</body></html>
